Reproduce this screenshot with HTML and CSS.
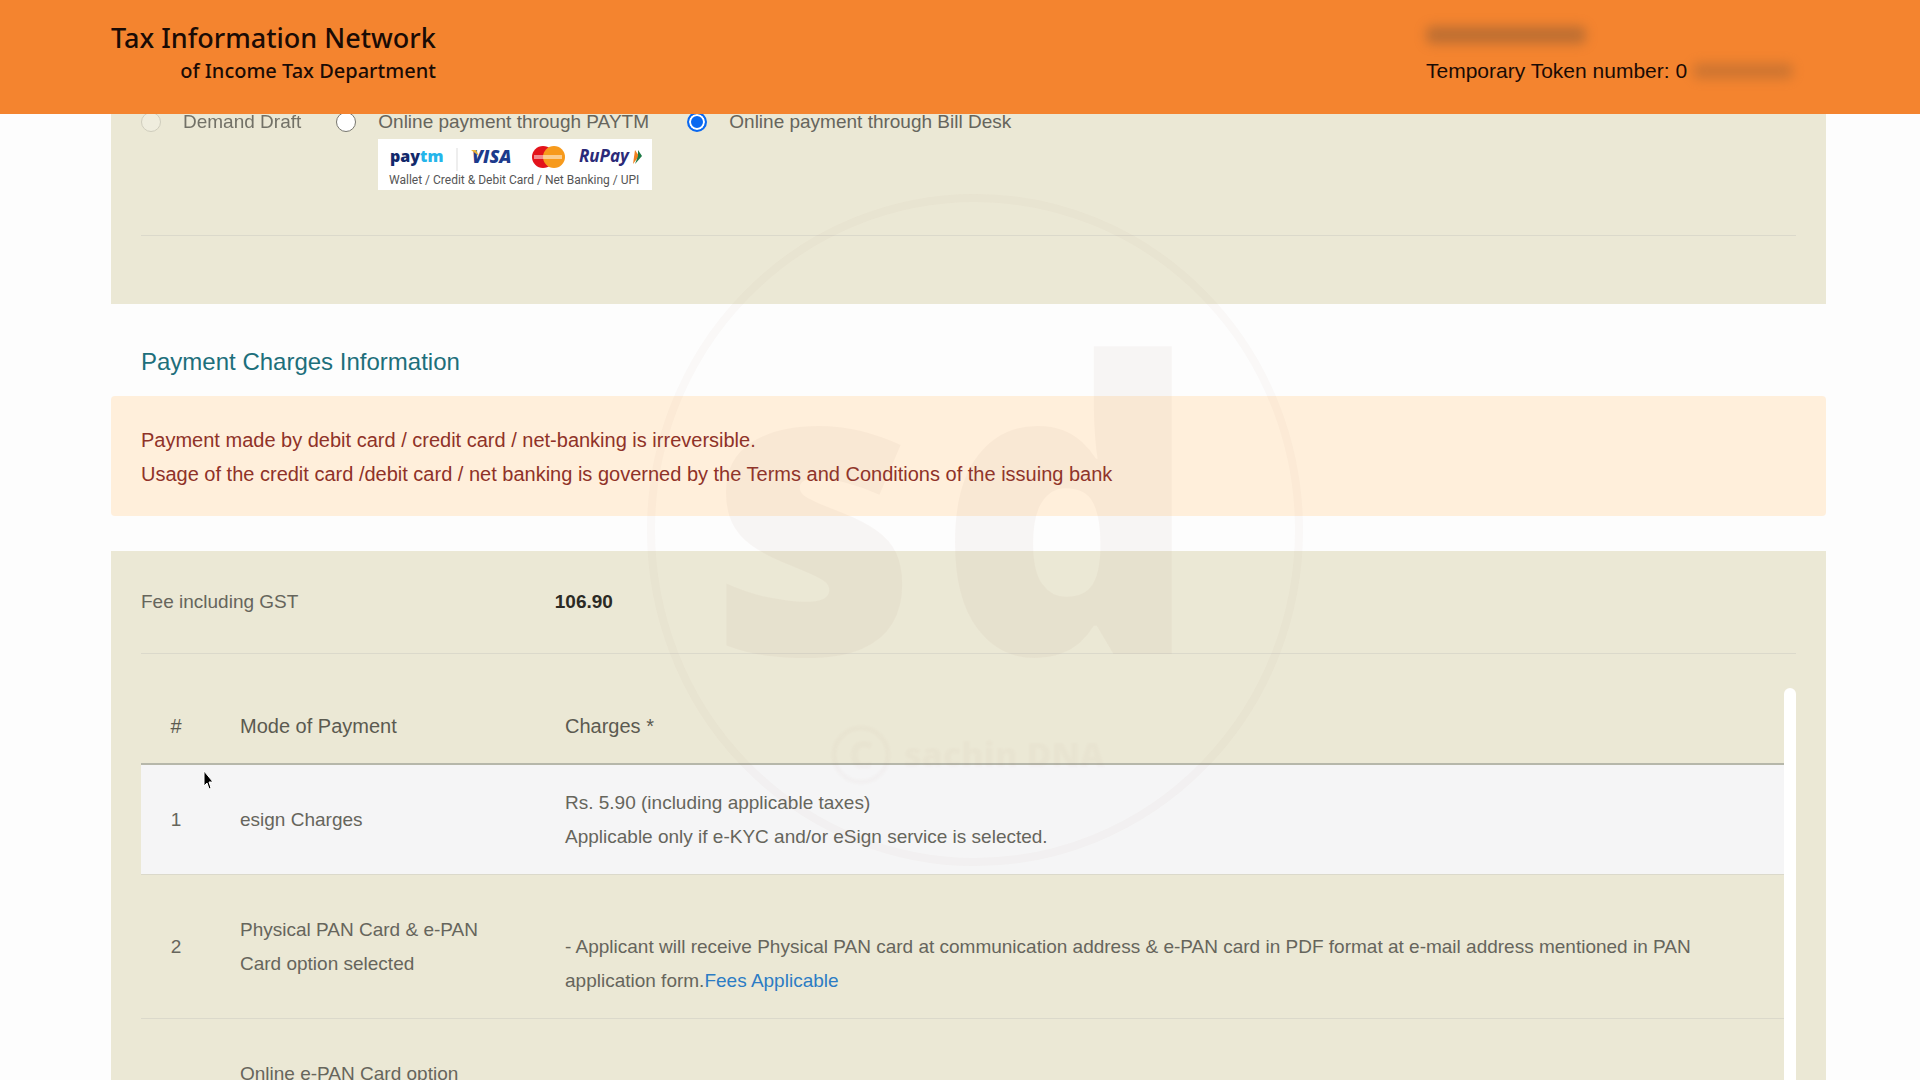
FILE: index.html
```html
<!DOCTYPE html>
<html lang="en">
<head>
<meta charset="utf-8">
<title>Tax Information Network</title>
<link rel="stylesheet" href="styles.css">
</head>
<body>
<header class="site-header">
  <div class="brand">
    <span class="brand-name">Tax Information Network</span>
    <span class="brand-sub">of Income Tax Department</span>
  </div>
  <div class="session">
    <span class="masked masked-name"></span>
    <span class="token">Temporary Token number: 0<span class="masked masked-token"></span></span>
  </div>
</header>

<main class="page">
  <form class="panel payment-modes">
    <div class="modes">
      <div class="mode">
        <input class="radio" type="radio" name="mode" id="dd" disabled>
        <label for="dd" class="is-disabled">Demand Draft</label>
      </div>
      <div class="mode">
        <input class="radio" type="radio" name="mode" id="paytm">
        <label for="paytm">Online payment through PAYTM
          <svg class="cards" viewBox="0 0 274 51" role="img" aria-label="Paytm, Visa, Mastercard, RuPay">
            <rect width="274" height="51" fill="#fff"/>
            <text x="12" y="23" class="logo-text logo-paytm">pay<tspan fill="#25b5ea">tm</tspan></text>
            <path d="M79 9V32" stroke="#ddd"/>
            <text x="94" y="24" class="logo-text logo-visa">VISA</text>
            <path d="M93 11h5l3 6z" fill="#e8b13a"/>
            <circle cx="165" cy="18" r="11" fill="#e3131b"/>
            <circle cx="176" cy="18" r="11" fill="#f79a1c"/>
            <path d="M156 16h28v4h-28z" fill="#fff" opacity=".5"/>
            <text x="201" y="23" class="logo-text logo-rupay">RuPay</text>
            <path d="M257 11l4 6-6 8z" fill="#f08020"/>
            <path d="M260 11l4 6-7 8 3-8z" fill="#1d7a45"/>
            <text x="11" y="45" class="logo-caption">Wallet / Credit &amp; Debit Card / Net Banking / UPI</text>
          </svg>
        </label>
      </div>
      <div class="mode">
        <input class="radio" type="radio" name="mode" id="billdesk" checked>
        <label for="billdesk">Online payment through Bill Desk</label>
      </div>
    </div>
    <hr class="rule">
  </form>

  <h2 class="section-title">Payment Charges Information</h2>

  <div class="notice">
    Payment made by debit card / credit card / net-banking is irreversible.<br>
    Usage of the credit card /debit card / net banking is governed by the Terms and Conditions of the issuing bank
  </div>

  <section class="panel charges">
    <dl class="fee">
      <dt>Fee including GST</dt>
      <dd>106.90</dd>
    </dl>
    <hr class="rule">
    <div class="table-wrap">
      <table class="rates">
        <colgroup><col class="col-no"><col class="col-mode"><col></colgroup>
        <thead>
          <tr><th>#</th><th>Mode of Payment</th><th>Charges *</th></tr>
        </thead>
        <tbody>
          <tr class="shaded"><td>1</td><td>esign Charges</td><td>Rs. 5.90 (including applicable taxes)<br>Applicable only if e-KYC and/or eSign service is selected.</td></tr>
          <tr><td>2</td><td>Physical PAN Card &amp; e-PAN Card option selected</td><td><br>- Applicant will receive Physical PAN card at communication address &amp; e-PAN card in PDF format at e-mail address mentioned in PAN application form.<a href="#fees">Fees Applicable</a></td></tr>
          <tr><td>3</td><td>Online e-PAN Card option selected</td><td><br><br><br></td></tr>
        </tbody>
      </table>
      <div class="track"></div>
    </div>
  </section>
</main>

<svg class="watermark" viewBox="0 0 670 680" aria-hidden="true">
  <ellipse cx="333" cy="340" rx="324" ry="332" class="wm-ring"/>
  <text x="67" y="464" class="wm-big">s</text>
  <text x="296" y="464" class="wm-big">d</text>
  <g class="wm-credit">
    <circle cx="219" cy="565" r="27" fill="none" stroke="currentColor" stroke-width="5"/>
    <text x="219" y="579" class="wm-c">C</text>
    <text x="262" y="577" class="wm-small">sachin DNA</text>
  </g>
</svg>

<svg class="cursor" viewBox="0 0 12 20" aria-hidden="true">
  <path d="M1 1V16L4 13L6 19L8 18L6 12H10Z" fill="#000" stroke="#fff" stroke-width="1"/>
</svg>
</body>
</html>
```
FILE: styles.css
```css
* { box-sizing: border-box; }

body {
  margin: 0;
  height: 100vh;
  display: flex;
  flex-direction: column;
  overflow: hidden;
  background: #fdfdfd;
  color: #66655c;
  font: 19px/34px "Liberation Sans", Helvetica, Arial, sans-serif;
}

.site-header {
  flex: none;
  display: flex;
  justify-content: space-between;
  height: 114px;
  padding: 20px 94px 0 111px;
  background: #f4842f;
  color: #1a0b05;
}

.brand {
  display: flex;
  flex-direction: column;
  align-items: flex-end;
  font-family: "Noto Sans", "Open Sans", sans-serif;
  font-weight: 500;
}
.brand-name { font-size: 27px; line-height: 36px; }
.brand-sub { font-size: 20px; line-height: 30px; }

.session {
  width: 400px;
  display: flex;
  flex-direction: column;
  gap: 10px;
  font-size: 21px;
}
.token { display: flex; align-items: center; gap: 6px; white-space: nowrap; }
.masked {
  border-radius: 6px;
  background: #8a5a35;
  filter: blur(6px);
}
.masked-name { width: 160px; height: 18px; margin-top: 6px; opacity: .5; }
.masked-token { width: 100px; height: 16px; opacity: .35; }

.page {
  flex: 1;
  min-height: 0;
  overflow: hidden;
  padding: 0 94px 0 111px;
}

.panel { background: #ebe8d5; padding: 0 30px; }

.payment-modes { margin-top: -9px; padding-bottom: 68px; }
.modes {
  display: flex;
  gap: 35px;
  height: 130px;
}
.mode { display: flex; align-items: flex-start; gap: 22px; }
.mode label { display: block; }
.is-disabled { opacity: .9; }

.radio {
  appearance: none;
  flex: none;
  width: 20px;
  height: 20px;
  margin: 7px 0 0;
  border: 1px solid #77766e;
  border-radius: 50%;
  background: #fff;
}
.radio:disabled { border-color: #cfcdbd; background: #efedde; }
.radio:checked {
  border: 2px solid #0a68f0;
  background: #0a68f0;
  box-shadow: inset 0 0 0 2px #fff;
}

.cards { display: block; width: 274px; height: 51px; }
.logo-text { font-family: "Open Sans", sans-serif; font-weight: 800; }
.logo-paytm { fill: #12296b; font-size: 16px; }
.logo-visa { fill: #1c3a8c; font-style: italic; font-size: 18px; }
.logo-rupay { fill: #2b2a78; font-style: italic; font-weight: 700; font-size: 17px; }
.logo-caption { font-family: Roboto, sans-serif; font-size: 12px; fill: #555; }

.rule { margin: 0; border: 0; border-top: 1px solid #dbd9cb; }

.section-title {
  margin: 0;
  padding: 38px 30px 14px;
  color: #1d6f7b;
  font-size: 24px;
  line-height: 40px;
  font-weight: 400;
}

.notice {
  margin-bottom: 35px;
  padding: 27px 30px 25px;
  border-radius: 4px;
  background: #ffefdb;
  color: #8f3228;
  font-size: 20px;
}

.charges { min-height: 600px; }
.fee { display: flex; margin: 0; padding: 34px 0; }
.fee dt { flex: 0 0 25%; }
.fee dd { margin: 0; color: #2b2a24; font-weight: 700; }

.table-wrap { display: flex; margin-top: 34px; }
.track { flex: none; width: 12px; border-radius: 6px 6px 0 0; background: #fff; }

.rates { flex: 1; border-collapse: collapse; table-layout: fixed; }
.col-no { width: 70px; }
.col-mode { width: 325px; }
.rates th, .rates td { padding: 21px 29px 20px; text-align: left; font-weight: 400; }
.rates th { border-bottom: 2px solid #b6b7aa; color: #5b5a50; font-size: 20px; }
.rates td { border-bottom: 1px solid #dbd9cb; }
.rates th:first-child, .rates td:first-child { padding: 21px 0 20px; text-align: center; }
.shaded { background: #f5f5f6; }
.rates a { color: #2c7cc4; text-decoration: none; }

.watermark {
  position: absolute;
  left: 642px;
  top: 190px;
  width: 670px;
  height: 680px;
  color: #a0705f;
  opacity: .05;
  pointer-events: none;
}
.wm-ring { fill: none; stroke: currentColor; stroke-width: 8px; opacity: .7; }
.wm-credit { opacity: .6; filter: blur(1px); }
.wm-big, .wm-c, .wm-small { fill: currentColor; font-family: "Open Sans", sans-serif; font-weight: 800; }
.wm-big { font-size: 405px; }
.wm-c { font-size: 38px; text-anchor: middle; }
.wm-small { font-size: 34px; }

.cursor { position: absolute; left: 203px; top: 770px; width: 12px; height: 20px; }
```
